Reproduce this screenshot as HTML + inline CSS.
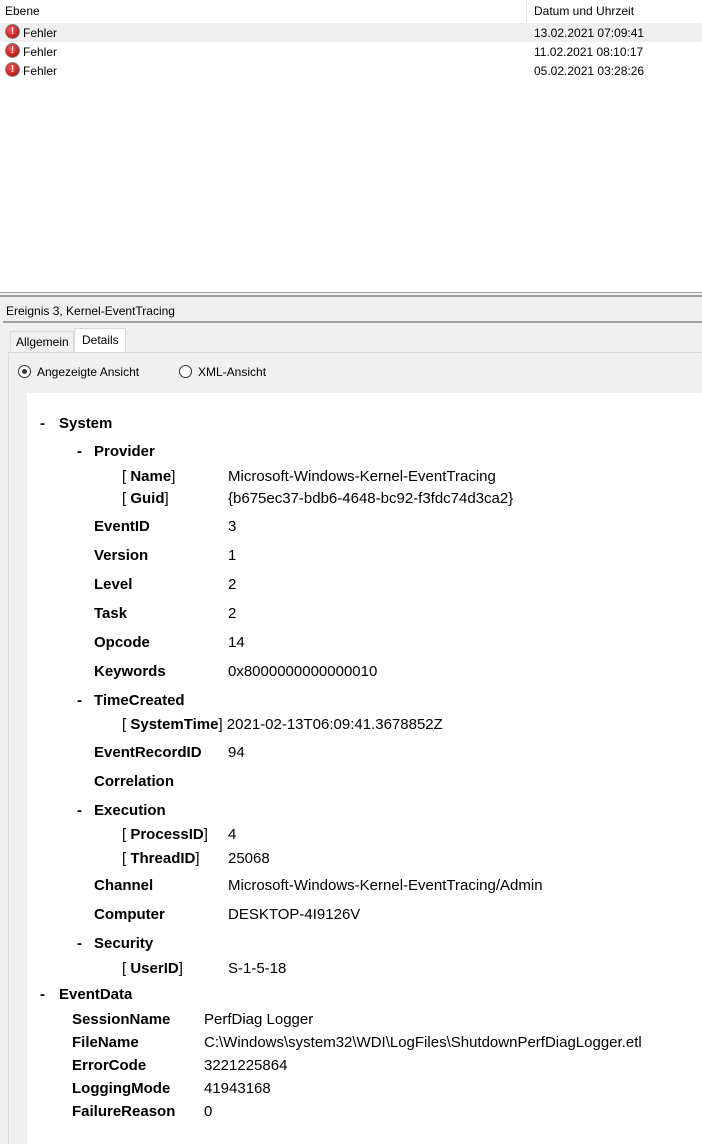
<!DOCTYPE html>
<html><head><meta charset="utf-8"><style>
body{margin:0;width:702px;height:1144px;position:relative;overflow:hidden;background:#f0f0f0;font-family:"Liberation Sans",sans-serif;color:#000}
.a{position:absolute;white-space:nowrap}
.s{font-size:12px}
.t{font-size:15px;line-height:18px;margin-top:1px}
b{font-weight:bold}
.ic{position:absolute;width:13px;height:13px;border-radius:50%;background:radial-gradient(circle at 40% 35%,#f06060,#c01818 70%);border:1px solid #888;color:#fff;font:bold 10px/13px "Liberation Sans",sans-serif;text-align:center}
</style></head><body>
<div class="a" style="left:0;top:0;width:702px;height:292px;background:#fff;border-bottom:1px solid #a0a0a0"></div>
<div class="a" style="left:0;top:0;width:702px;height:22px;background:#fff"></div>
<div class="a" style="left:526px;top:0;width:1px;height:22px;background:#e5e5e5"></div>
<div class="a s" style="left:5px;top:4px">Ebene</div>
<div class="a s" style="left:534px;top:4px">Datum und Uhrzeit</div>
<div class="a" style="left:0;top:23px;width:702px;height:19px;background:#efefef"></div>
<div class="ic" style="left:5px;top:24px">!</div><div class="a s" style="left:23px;top:26px">Fehler</div><div class="a s" style="left:534px;top:26px">13.02.2021 07:09:41</div>
<div class="ic" style="left:5px;top:43px">!</div><div class="a s" style="left:23px;top:45px">Fehler</div><div class="a s" style="left:534px;top:45px">11.02.2021 08:10:17</div>
<div class="ic" style="left:5px;top:62px">!</div><div class="a s" style="left:23px;top:64px">Fehler</div><div class="a s" style="left:534px;top:64px">05.02.2021 03:28:26</div>
<div class="a" style="left:0;top:295px;width:702px;height:2px;background:#a0a0a0"></div>
<div class="a s" style="left:6px;top:304px">Ereignis 3, Kernel-EventTracing</div>
<div class="a" style="left:3px;top:321px;width:699px;height:2px;background:#a0a0a0"></div>
<div class="a s" style="left:10px;top:331px;width:64px;height:20px;border:1px solid #d9d9d9;border-bottom:none;box-sizing:border-box"></div>
<div class="a s" style="left:16px;top:335px">Allgemein</div>
<div class="a" style="left:74px;top:328px;width:52px;height:25px;background:#fff;border:1px solid #d9d9d9;border-bottom:none;box-sizing:border-box"></div>
<div class="a s" style="left:82px;top:333px">Details</div>
<div class="a" style="left:8px;top:352px;width:694px;height:792px;border-left:1px solid #d9d9d9;border-top:1px solid #d9d9d9;box-sizing:border-box"></div>
<div class="a" style="left:18px;top:365px;width:11px;height:11px;border:1px solid #333;border-radius:50%;background:#fff"></div>
<div class="a" style="left:22px;top:369px;width:5px;height:5px;border-radius:50%;background:#333"></div>
<div class="a s" style="left:37px;top:365px">Angezeigte Ansicht</div>
<div class="a" style="left:179px;top:365px;width:11px;height:11px;border:1px solid #333;border-radius:50%;background:#fff"></div>
<div class="a s" style="left:198px;top:365px">XML-Ansicht</div>
<div class="a" style="left:27px;top:393px;width:675px;height:751px;background:#fff"></div>

<div class="a t" style="left:40px;top:414px"><b>-</b></div><div class="a t" style="left:59px;top:414px"><b>System</b></div>
<div class="a t" style="left:77px;top:442px"><b>-</b></div><div class="a t" style="left:94px;top:442px"><b>Provider</b></div>
<div class="a t" style="left:122px;top:467px">[ <b>Name</b>]</div><div class="a t" style="left:228px;top:467px">Microsoft-Windows-Kernel-EventTracing</div>
<div class="a t" style="left:122px;top:489px">[ <b>Guid</b>]</div><div class="a t" style="left:228px;top:489px">{b675ec37-bdb6-4648-bc92-f3fdc74d3ca2}</div>
<div class="a t" style="left:94px;top:517px"><b>EventID</b></div><div class="a t" style="left:228px;top:517px">3</div>
<div class="a t" style="left:94px;top:546px"><b>Version</b></div><div class="a t" style="left:228px;top:546px">1</div>
<div class="a t" style="left:94px;top:575px"><b>Level</b></div><div class="a t" style="left:228px;top:575px">2</div>
<div class="a t" style="left:94px;top:604px"><b>Task</b></div><div class="a t" style="left:228px;top:604px">2</div>
<div class="a t" style="left:94px;top:633px"><b>Opcode</b></div><div class="a t" style="left:228px;top:633px">14</div>
<div class="a t" style="left:94px;top:662px"><b>Keywords</b></div><div class="a t" style="left:228px;top:662px">0x8000000000000010</div>
<div class="a t" style="left:77px;top:691px"><b>-</b></div><div class="a t" style="left:94px;top:691px"><b>TimeCreated</b></div>
<div class="a t" style="left:122px;top:715px">[ <b>SystemTime</b>] 2021-02-13T06:09:41.3678852Z</div>
<div class="a t" style="left:94px;top:743px"><b>EventRecordID</b></div><div class="a t" style="left:228px;top:743px">94</div>
<div class="a t" style="left:94px;top:772px"><b>Correlation</b></div>
<div class="a t" style="left:77px;top:801px"><b>-</b></div><div class="a t" style="left:94px;top:801px"><b>Execution</b></div>
<div class="a t" style="left:122px;top:825px">[ <b>ProcessID</b>]</div><div class="a t" style="left:228px;top:825px">4</div>
<div class="a t" style="left:122px;top:849px">[ <b>ThreadID</b>]</div><div class="a t" style="left:228px;top:849px">25068</div>
<div class="a t" style="left:94px;top:876px"><b>Channel</b></div><div class="a t" style="left:228px;top:876px">Microsoft-Windows-Kernel-EventTracing/Admin</div>
<div class="a t" style="left:94px;top:905px"><b>Computer</b></div><div class="a t" style="left:228px;top:905px">DESKTOP-4I9126V</div>
<div class="a t" style="left:77px;top:934px"><b>-</b></div><div class="a t" style="left:94px;top:934px"><b>Security</b></div>
<div class="a t" style="left:122px;top:959px">[ <b>UserID</b>]</div><div class="a t" style="left:228px;top:959px">S-1-5-18</div>
<div class="a t" style="left:40px;top:985px"><b>-</b></div><div class="a t" style="left:59px;top:985px"><b>EventData</b></div>
<div class="a t" style="left:72px;top:1010px"><b>SessionName</b></div><div class="a t" style="left:204px;top:1010px">PerfDiag Logger</div>
<div class="a t" style="left:72px;top:1033px"><b>FileName</b></div><div class="a t" style="left:204px;top:1033px">C:\Windows\system32\WDI\LogFiles\ShutdownPerfDiagLogger.etl</div>
<div class="a t" style="left:72px;top:1056px"><b>ErrorCode</b></div><div class="a t" style="left:204px;top:1056px">3221225864</div>
<div class="a t" style="left:72px;top:1079px"><b>LoggingMode</b></div><div class="a t" style="left:204px;top:1079px">41943168</div>
<div class="a t" style="left:72px;top:1102px"><b>FailureReason</b></div><div class="a t" style="left:204px;top:1102px">0</div>
</body></html>
